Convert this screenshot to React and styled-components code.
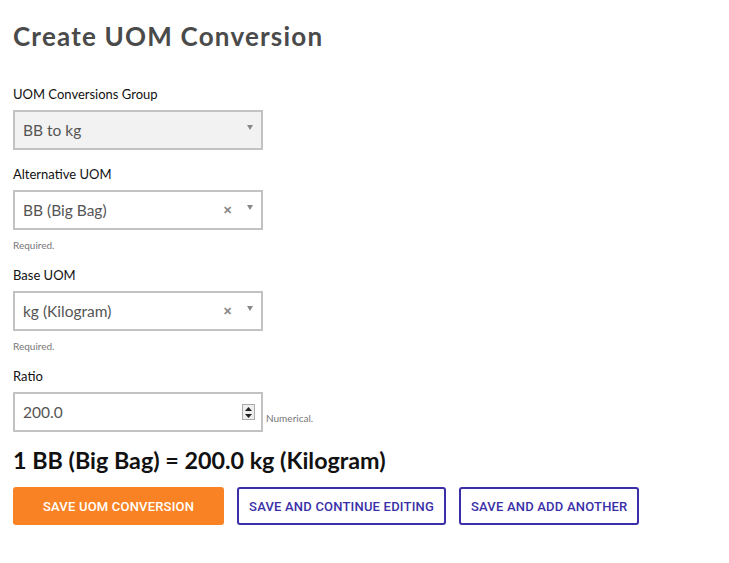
import React from 'react'
import styled, { createGlobalStyle } from 'styled-components'

const GlobalStyle = createGlobalStyle`
   body {
      margin: 0;
      background: #ffffff;
      font-family: 'Lato', 'Liberation Sans', sans-serif;
   }
`

const fields = [
   { label: 'Alternative UOM', value: 'BB (Big Bag)' },
   { label: 'Base UOM', value: 'kg (Kilogram)' },
]

const App = () => {
   return (
      <Page>
         <GlobalStyle />
         <Title>Create UOM Conversion</Title>
         <Form>
            <Field>
               <Label>UOM Conversions Group</Label>
               <SelectBox disabled>
                  <SelectValue>BB to kg</SelectValue>
                  <Arrow />
               </SelectBox>
            </Field>
            {fields.map((f) => (
               <Field key={f.label}>
                  <Label>{f.label}</Label>
                  <SelectBox>
                     <SelectValue>{f.value}</SelectValue>
                     <Clear>✕</Clear>
                     <Arrow />
                  </SelectBox>
                  <Help>Required.</Help>
               </Field>
            ))}
            <Field>
               <Label>Ratio</Label>
               <InputRow>
                  <SelectBox as="div">
                     <SelectValue>200.0</SelectValue>
                     <Spinner>
                        <SpinHalf>
                           <svg width="7" height="4" viewBox="0 0 7 4">
                              <path d="M0 4 L3.5 0 L7 4 Z" fill="#222" />
                           </svg>
                        </SpinHalf>
                        <SpinHalf>
                           <svg width="7" height="4" viewBox="0 0 7 4">
                              <path d="M0 0 L3.5 4 L7 0 Z" fill="#222" />
                           </svg>
                        </SpinHalf>
                     </Spinner>
                  </SelectBox>
                  <Hint>Numerical.</Hint>
               </InputRow>
            </Field>
         </Form>
         <Result>1 BB (Big Bag) = 200.0 kg (Kilogram)</Result>
         <Buttons>
            <Button primary>Save UOM Conversion</Button>
            <Button>Save and continue editing</Button>
            <Button>Save and add another</Button>
         </Buttons>
      </Page>
   )
}

export default App

const Page = styled('div')({
   padding: '18px 13px',
   color: '#222',
})

const Title = styled('h1')({
   margin: 0,
   fontSize: '26px',
   fontWeight: 700,
   letterSpacing: '1.2px',
   color: '#4a4a4a',
   lineHeight: '36px',
})

const Form = styled('div')({
   marginTop: '32px',
   display: 'flex',
   flexDirection: 'column',
})

const Field = styled('div')({
   display: 'flex',
   flexDirection: 'column',
   marginBottom: '16px',
})

const Label = styled('div')({
   fontSize: '13px',
   lineHeight: '16px',
   color: '#111',
   marginBottom: '8px',
})

const SelectBox = styled('div')(({ disabled }) => ({
   boxSizing: 'border-box',
   width: '250px',
   height: '40px',
   border: '2px solid #c2c2c2',
   background: disabled ? '#f2f2f2' : '#fff',
   display: 'flex',
   alignItems: 'center',
   padding: '0 8px 0 8px',
   gap: '10px',
}))

const SelectValue = styled('span')({
   flex: 1,
   fontSize: '15.5px',
   color: '#555',
})

const Clear = styled('span')({
   fontSize: '11px',
   fontWeight: 900,
   color: '#888',
   marginRight: '5px',
})

const Arrow = styled('span')({
   width: 0,
   height: 0,
   borderLeft: '3.5px solid transparent',
   borderRight: '3.5px solid transparent',
   borderTop: '5px solid #888',
   marginTop: '-6px',
})

const Help = styled('div')({
   fontSize: '10px',
   color: '#777',
   marginTop: '9px',
})

const InputRow = styled('div')({
   display: 'flex',
   alignItems: 'flex-end',
   gap: '3px',
})

const Spinner = styled('div')({
   display: 'flex',
   flexDirection: 'column',
   border: '1px solid #aaa',
   background: '#eee',
   width: '11px',
   marginRight: '-2px',
})

const SpinHalf = styled('div')({
   height: '7px',
   display: 'flex',
   alignItems: 'center',
   justifyContent: 'center',
})

const Hint = styled('span')({
   fontSize: '10px',
   color: '#777',
   marginBottom: '8px',
})

const Result = styled('div')({
   fontSize: '23.3px',
   fontWeight: 700,
   color: '#111',
   lineHeight: '28px',
   marginTop: '-2px',
})

const Buttons = styled('div')({
   display: 'flex',
   gap: '13px',
   marginTop: '13px',
})

const Button = styled('button')(({ primary }) => ({
   boxSizing: 'border-box',
   height: '38px',
   fontFamily: "'Roboto', 'Liberation Sans', sans-serif",
   fontSize: '13px',
   fontWeight: 500,
   letterSpacing: '0.2px',
   textTransform: 'uppercase',
   borderRadius: '3px',
   cursor: 'pointer',
   background: primary ? '#f98324' : '#fff',
   color: primary ? '#fff' : '#3a2fa8',
   border: primary ? 'none' : '2px solid #3a2fa8',
   padding: primary ? '0 30px' : '0 10px',
}))
